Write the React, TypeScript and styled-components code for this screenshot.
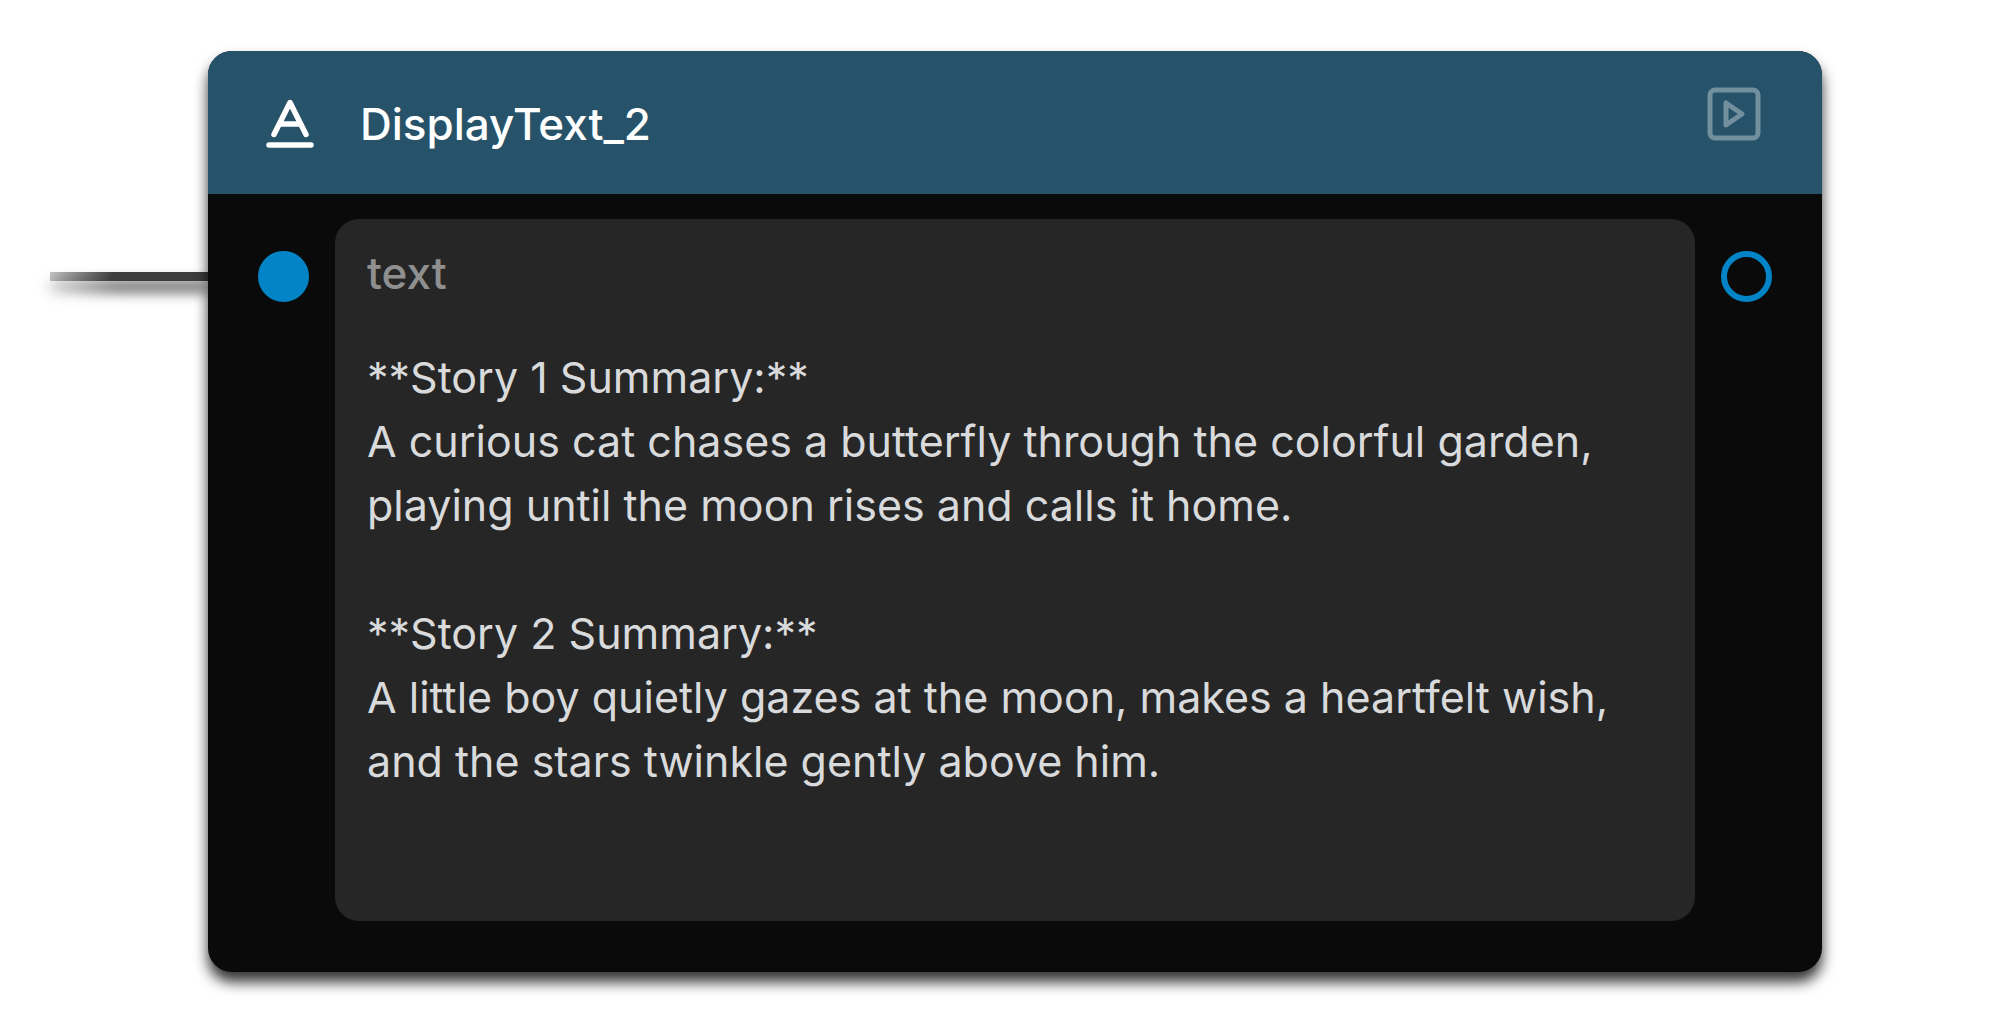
import React from "react";
import styled, { createGlobalStyle } from "styled-components";

const GlobalStyle = createGlobalStyle`
  *, *::before, *::after { box-sizing: border-box; }
  body {
    margin: 0;
    background: #fff;
    font-family: Inter, "Liberation Sans", sans-serif;
    font-size: 44px;
    line-height: 64px;
  }
`;

const Canvas = styled.main`
  display: flex;
  align-items: flex-start;
  padding: 51px 178px 51px 50px;
`;

const Wire = styled.div`
  flex: 0 0 158px;
  height: 9px;
  margin-top: 221px;
  background: linear-gradient(100deg, rgba(60, 60, 60, 0.3), #3c3c3c 40%);
  filter: drop-shadow(0 10px 7px rgba(0, 0, 0, 0.8));
`;

const Node = styled.article`
  position: relative;
  flex: 1;
  min-width: 0;
  border-radius: 24px;
  background: #0a0a0a;
  box-shadow: 0 10px 14px rgba(0, 0, 0, 0.8);
`;

const Header = styled.header`
  display: flex;
  align-items: center;
  gap: 46px;
  height: 143px;
  padding: 0 61px 0 58px;
  border-radius: 24px 24px 0 0;
  background: #26526a;
  color: #fff;
`;

const Title = styled.h1`
  flex: 1;
  margin: 0;
  padding-top: 2px;
  font-size: 44px;
  font-weight: 500;
`;

const RunButton = styled.button`
  display: flex;
  align-self: flex-start;
  margin-top: 35px;
  padding: 0;
  border: 0;
  background: none;
  color: #728f9e;
  cursor: pointer;
`;

const Body = styled.div`
  display: flex;
  align-items: flex-start;
  gap: 26px;
  padding: 25px 50px 51px;
`;

const Port = styled.button<{ $filled?: boolean }>`
  flex: none;
  width: 51px;
  height: 51px;
  margin-top: 32px;
  padding: 0;
  border: 6px solid #0284c7;
  border-radius: 50%;
  background: ${(p) => (p.$filled ? "#0284c7" : "transparent")};
`;

const Field = styled.div`
  display: flex;
  flex: 1;
  flex-direction: column;
  gap: 40px;
  min-width: 0;
  padding: 22px 32px 32px;
  border-radius: 24px;
  background: #262626;
`;

const FieldLabel = styled.label`
  color: #8f8f8f;
  font-weight: 500;
`;

const FieldText = styled.textarea`
  display: block;
  width: 100%;
  height: 544px;
  padding: 0;
  border: 0;
  outline: 0;
  resize: none;
  overflow: hidden;
  background: transparent;
  color: #d9dadc;
  font: inherit;
  font-size: 43px;
`;

const story = `**Story 1 Summary:**
A curious cat chases a butterfly through the colorful garden, playing until the moon rises and calls it home.

**Story 2 Summary:**
A little boy quietly gazes at the moon, makes a heartfelt wish, and the stars twinkle gently above him.`;

const TextIcon = () => (
  <svg width="48" height="50" viewBox="0 0 48 50" fill="none" stroke="currentColor" strokeWidth="5.5" strokeLinecap="round" strokeLinejoin="round" aria-hidden="true">
    <path d="M8 36.5 24 4.5l16 32M14 26h20" />
    <path d="M3 47h42" />
  </svg>
);

const RunIcon = () => (
  <svg width="55" height="55" viewBox="0 0 55 55" fill="none" stroke="currentColor" strokeWidth="5" strokeLinejoin="round" aria-hidden="true">
    <rect x="4" y="4" width="48" height="48" rx="5" />
    <path d="M20 17v22l16-11z" />
  </svg>
);

export default function App() {
  return (
    <>
      <GlobalStyle />
      <Canvas>
        <Wire />
        <Node>
          <Header>
            <TextIcon />
            <Title>DisplayText_2</Title>
            <RunButton type="button" aria-label="Run node">
              <RunIcon />
            </RunButton>
          </Header>
          <Body>
            <Port type="button" $filled aria-label="Input" />
            <Field>
              <FieldLabel htmlFor="node-text">text</FieldLabel>
              <FieldText id="node-text" readOnly spellCheck={false} defaultValue={story} />
            </Field>
            <Port type="button" aria-label="Output" />
          </Body>
        </Node>
      </Canvas>
    </>
  );
}
